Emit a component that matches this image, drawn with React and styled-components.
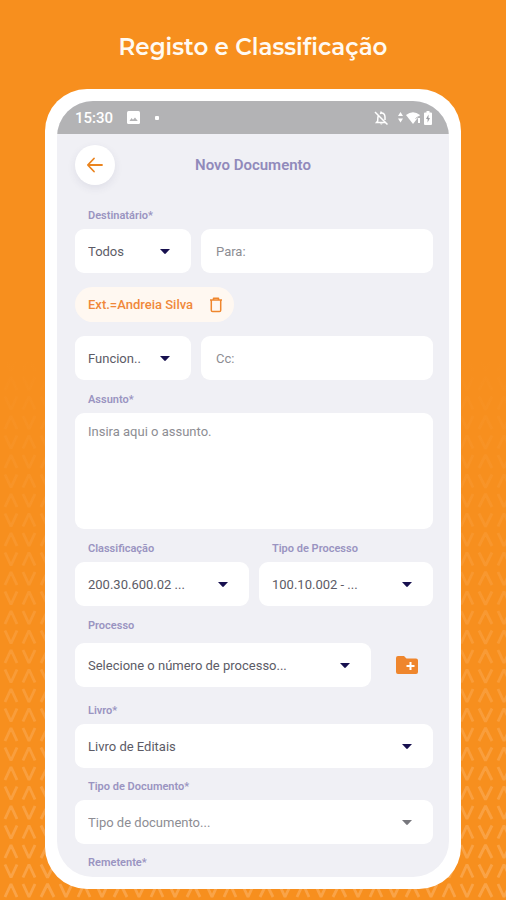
import React from "react";
import styled, { createGlobalStyle } from "styled-components";

const chevronTile = encodeURIComponent(
  `<svg xmlns="http://www.w3.org/2000/svg" width="73" height="39" viewBox="0 0 73 39">
    <g fill="none" stroke="#fbb56c" stroke-opacity=".6" stroke-width="2.8" stroke-linejoin="bevel">
      <path d="M5 18 11 5 17 18M23 5 29 18 35 5M41 18 47.500 5 54 18M60 5 66 18 72 5"/>
      <path d="M5 24.500 11 37.500 17 24.500M23 37.500 29 24.500 35 37.500M41 24.500 47.500 37.500 54 24.500M60 37.500 66 24.500 72 37.500"/>
    </g>
  </svg>`
);

const GlobalStyle = createGlobalStyle`
  *, *::before, *::after { box-sizing: border-box; }
  body { margin: 0; background: #f78f1e; font-family: Roboto, "Liberation Sans", sans-serif; }
  button, input, select, textarea { font: inherit; }
`;

const Page = styled.main`
  display: flex;
  flex-direction: column;
  min-height: 100vh;
  padding: 32px 45px 11px;
  background:
    linear-gradient(#f78f1e 40%, rgba(247, 143, 30, 0.45) 75%, rgba(247, 143, 30, 0.1)),
    url("data:image/svg+xml,${chevronTile}") left bottom -18px / 73px 39px,
    #f78f1e;
`;

const Headline = styled.h1`
  margin: 0 0 27px;
  color: #fffaf2;
  font: 600 23px/30px Montserrat, Inter, sans-serif;
  text-align: center;
`;

const Phone = styled.section`
  padding: 12px;
  border-radius: 42px;
  background: #fff;
`;

const Screen = styled.div`
  overflow: hidden;
  border-radius: 36px;
  background: #f0f0f5;
`;

const StatusBar = styled.div`
  display: flex;
  align-items: center;
  height: 33px;
  padding: 0 15px 0 18px;
  background: #b3b3b5;
  color: #fff;
`;

const Clock = styled.time`
  margin-right: 14px;
  font-size: 15px;
  font-weight: 500;
`;

const StatusDot = styled.span`
  width: 4px;
  height: 4px;
  margin-left: 15px;
  border-radius: 1px;
  background: #fff;
`;

const StatusIcons = styled.div`
  display: flex;
  align-items: center;
  margin-left: auto;
`;

const TopBar = styled.header`
  display: grid;
  grid-template-columns: 40px 1fr 40px;
  align-items: center;
  padding: 11px 18px 0;
`;

const BackButton = styled.button`
  display: grid;
  place-items: center;
  width: 40px;
  height: 40px;
  padding: 0;
  border: 0;
  border-radius: 50%;
  background: #fff;
  box-shadow: 0 3px 8px rgba(60, 50, 100, 0.09);
`;

const ScreenTitle = styled.h2`
  margin: 0;
  color: #918abb;
  font-size: 15px;
  font-weight: 600;
  text-align: center;
`;

const Form = styled.form`
  padding: 23px 16px 6px 18px;
`;

const Group = styled.div`
  min-width: 0;
  margin-top: ${(p) => p.$space || 0}px;
`;

const Label = styled.label`
  display: block;
  margin-bottom: ${(p) => p.$gap ?? 5}px;
  padding-left: 13px;
  color: #9a94c1;
  font-size: 11px;
  font-weight: 600;
  line-height: 16px;
`;

const Columns = styled.div`
  display: grid;
  grid-template-columns: ${(p) => p.$columns};
  gap: 10px;
  margin-top: ${(p) => p.$space || 0}px;
`;

const TextInput = styled.input`
  width: 100%;
  min-width: 0;
  height: 44px;
  padding: 0 15px;
  border: 0;
  border-radius: 9px;
  background: #fff;
  color: #5c5b66;
  font-size: 13px;
  &::placeholder { color: #8d8d93; opacity: 1; }
`;

const TextBox = styled.textarea`
  display: block;
  width: 100%;
  height: 116px;
  padding: 10px 13px;
  border: 0;
  border-radius: 9px;
  background: #fff;
  color: #5c5b66;
  font-size: 13px;
  line-height: 18px;
  resize: none;
  &::placeholder { color: #8d8d93; opacity: 1; }
`;

const SelectShell = styled.div`
  display: grid;
  align-items: center;
  min-width: 0;
  color: ${(p) => (p.$muted ? "#77777d" : "#17104f")};
  > * { grid-area: 1 / 1; }
`;

const SelectBox = styled.select`
  appearance: none;
  width: 100%;
  min-width: 0;
  height: 44px;
  padding: 0 32px 0 13px;
  border: 0;
  border-radius: 9px;
  background: #fff;
  color: ${(p) => (p.$muted ? "#8d8d93" : "#5c5b66")};
  font-size: 13px;
`;

const Caret = styled.svg`
  justify-self: end;
  margin-right: 21px;
  pointer-events: none;
`;

const Chip = styled.div`
  display: inline-flex;
  align-items: center;
  gap: 16px;
  height: 35px;
  margin: 14px 0;
  padding: 0 11px 0 13px;
  border-radius: 18px;
  background: #fff8f1;
  color: #f0883a;
  font-size: 13px;
  font-weight: 500;
`;

const IconButton = styled.button`
  display: grid;
  place-items: center;
  padding: 0;
  border: 0;
  background: none;
  color: #ef862d;
`;

function Select({ id, value, muted, label }) {
  return (
    <SelectShell $muted={muted}>
      <SelectBox id={id} aria-label={label} $muted={muted} defaultValue={value}>
        <option value={value}>{value}</option>
      </SelectBox>
      <Caret width="10" height="5" viewBox="0 0 10 5" aria-hidden="true">
        <path d="M0 0h10L5.800 4.600q-.8.700-1.600 0Z" fill="currentColor" />
      </Caret>
    </SelectShell>
  );
}

function SelectField({ id, label, value, muted, space }) {
  return (
    <Group $space={space}>
      <Label htmlFor={id}>{label}</Label>
      <Select id={id} value={value} muted={muted} />
    </Group>
  );
}

function PictureIcon() {
  return (
    <svg width="13" height="13" viewBox="0 0 13 13" aria-hidden="true">
      <rect width="13" height="13" rx="1.500" fill="#fff" />
      <path d="m2.500 10 2-3 1.500 1.800L8 6.500l2.800 3.500Z" fill="#b3b3b5" />
    </svg>
  );
}

function SystemIcons() {
  return (
    <svg width="60" height="18" viewBox="0 0 60 18" aria-hidden="true">
      <g fill="none" stroke="#fff" strokeWidth="1.500">
        <path d="M4.500 6.500C3.600 8 3.700 10 3.700 12L2.500 13.500h9M6 4.600c3-1.600 5 .7 5 3.400v3M7 3.800V2.500" />
        <path d="m1 3 12.500 12.500" />
      </g>
      <path d="M5.800 14.500h3q-1.500 2-3 0Z" fill="#fff" />
      <path d="m26.500 3 2.500 4h-5Zm0 10.500L24 9.500h5Z" fill="#fff" />
      <path d="M32 6q7-5.500 14 0L39 15Z" fill="#fff" />
      <path d="m41.500 9.500 3-2v6.500" fill="none" stroke="#b3b3b5" strokeWidth="1" />
      <path d="M44 9h2v5h-2Z" fill="#fff" />
      <path d="M50 4.500q0-1 1-1h1.500V2h3v1.500H57q1 0 1 1V15q0 1-1 1h-6q-1 0-1-1Z" fill="#fff" />
      <path d="m54.500 5.500-2.500 4.500h1.600v3.500L56 9h-1.500Z" fill="#9f9fa3" />
    </svg>
  );
}

export default function App() {
  return (
    <Page>
      <GlobalStyle />
      <Headline>Registo e Classificação</Headline>
      <Phone>
        <Screen>
          <StatusBar>
            <Clock>15:30</Clock>
            <PictureIcon />
            <StatusDot />
            <StatusIcons><SystemIcons /></StatusIcons>
          </StatusBar>
          <TopBar>
            <BackButton type="button" aria-label="Voltar">
              <svg width="18" height="16" viewBox="0 0 18 16" aria-hidden="true">
                <path d="M16 8H2M8 1.500 1.800 8 8 14.500" fill="none" stroke="#ea841f" strokeWidth="1.800" strokeLinecap="round" strokeLinejoin="round" />
              </svg>
            </BackButton>
            <ScreenTitle>Novo Documento</ScreenTitle>
          </TopBar>
          <Form>
            <Group>
              <Label htmlFor="para">Destinatário*</Label>
              <Columns $columns="1fr 2fr">
                <Select label="Grupo do destinatário" value="Todos" />
                <TextInput id="para" placeholder="Para:" />
              </Columns>
            </Group>
            <Chip>
              Ext.=Andreia Silva
              <IconButton type="button" aria-label="Remover">
                <svg width="14" height="16" viewBox="0 0 14 16" aria-hidden="true">
                  <path d="M1 3h12M4.500 3V1.300h5V3M2.300 3v10.200q0 1.300 1.300 1.300h6.800q1.300 0 1.300-1.300V3" fill="none" stroke="currentColor" strokeWidth="1.500" strokeLinejoin="round" />
                </svg>
              </IconButton>
            </Chip>
            <Columns $columns="1fr 2fr">
              <Select label="Grupo em cópia" value="Funcion.." />
              <TextInput aria-label="Cc" placeholder="Cc:" />
            </Columns>
            <Group $space={12}>
              <Label htmlFor="assunto">Assunto*</Label>
              <TextBox id="assunto" placeholder="Insira aqui o assunto." />
            </Group>
            <Columns $columns="1fr 1fr" $space={12}>
              <SelectField id="classificacao" label="Classificação" value="200.30.600.02 ..." />
              <SelectField id="tipo-processo" label="Tipo de Processo" value="100.10.002 - ..." />
            </Columns>
            <Group $space={12}>
              <Label htmlFor="processo" $gap={9}>Processo</Label>
              <Columns $columns="1fr 52px">
                <Select id="processo" value="Selecione o número de processo..." />
                <IconButton type="button" aria-label="Novo processo">
                  <svg width="22" height="18" viewBox="0 0 22 18" aria-hidden="true">
                    <path d="M2 0h6l2.500 2.500H20q2 0 2 2V16q0 2-2 2H2q-2 0-2-2V2q0-2 2-2Z" fill="currentColor" />
                    <path d="M14.500 6v8m-4-4h8" fill="none" stroke="#fff" strokeWidth="2" />
                  </svg>
                </IconButton>
              </Columns>
            </Group>
            <SelectField id="livro" label="Livro*" value="Livro de Editais" space={16} />
            <SelectField id="tipo-documento" label="Tipo de Documento*" value="Tipo de documento..." muted space={11} />
            <Group $space={11}>
              <Label as="div" $gap={0}>Remetente*</Label>
            </Group>
          </Form>
        </Screen>
      </Phone>
    </Page>
  );
}
